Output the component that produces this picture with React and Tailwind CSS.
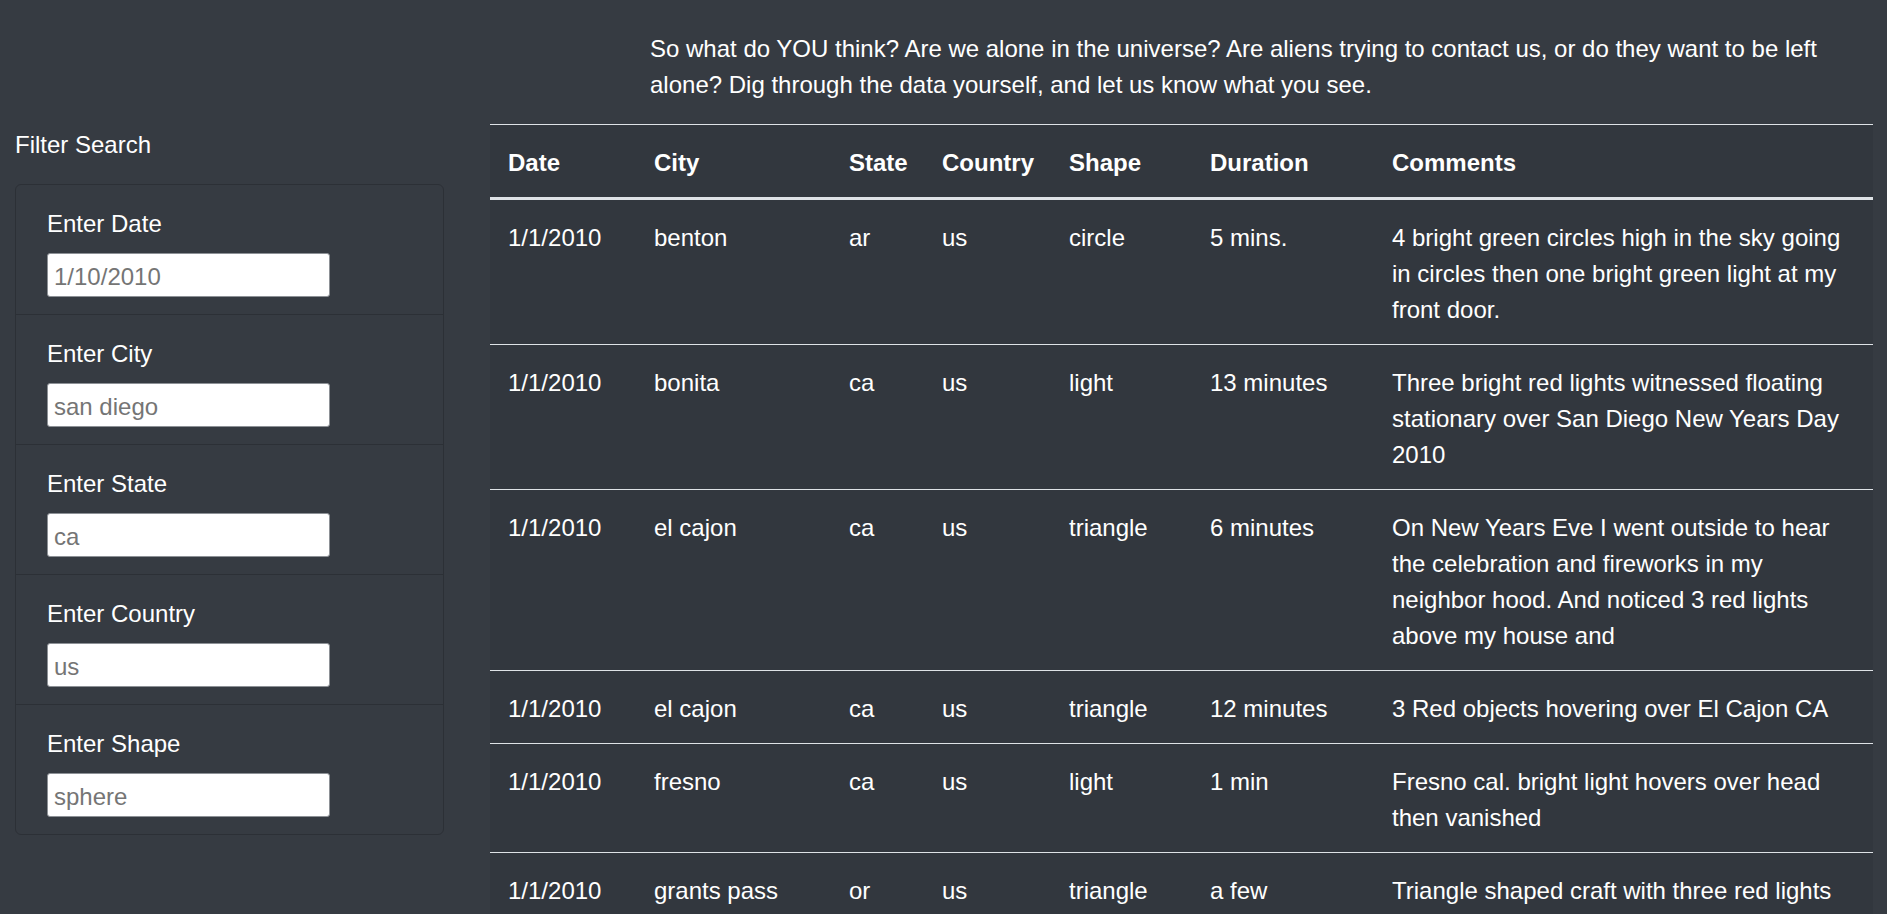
import React from 'react';

// Filter inputs shown in the left card
const filters = [
  { id: 'datetime', label: 'Enter Date', placeholder: '1/10/2010' },
  { id: 'city', label: 'Enter City', placeholder: 'san diego' },
  { id: 'state', label: 'Enter State', placeholder: 'ca' },
  { id: 'country', label: 'Enter Country', placeholder: 'us' },
  { id: 'shape', label: 'Enter Shape', placeholder: 'sphere' }
];

const columns = [
  { key: 'datetime', title: 'Date', width: 'w-[146px]' },
  { key: 'city', title: 'City', width: 'w-[195px]' },
  { key: 'state', title: 'State', width: 'w-[93px]' },
  { key: 'country', title: 'Country', width: 'w-[127px]' },
  { key: 'shape', title: 'Shape', width: 'w-[141px]' },
  { key: 'duration', title: 'Duration', width: 'w-[182px]' },
  { key: 'comments', title: 'Comments', width: 'w-[499px]' }
];

const sightings = [
  {
    datetime: '1/1/2010', city: 'benton', state: 'ar', country: 'us', shape: 'circle', duration: '5 mins.',
    comments: '4 bright green circles high in the sky going in circles then one bright green light at my front door.'
  },
  {
    datetime: '1/1/2010', city: 'bonita', state: 'ca', country: 'us', shape: 'light', duration: '13 minutes',
    comments: 'Three bright red lights witnessed floating stationary over San Diego New Years Day 2010'
  },
  {
    datetime: '1/1/2010', city: 'el cajon', state: 'ca', country: 'us', shape: 'triangle', duration: '6 minutes',
    comments: 'On New Years Eve I went outside to hear the celebration and fireworks in my neighbor hood. And noticed 3 red lights above my house and'
  },
  {
    datetime: '1/1/2010', city: 'el cajon', state: 'ca', country: 'us', shape: 'triangle', duration: '12 minutes',
    comments: '3 Red objects hovering over El Cajon CA'
  },
  {
    datetime: '1/1/2010', city: 'fresno', state: 'ca', country: 'us', shape: 'light', duration: '1 min',
    comments: 'Fresno cal. bright light hovers over head then vanished'
  },
  {
    datetime: '1/1/2010', city: 'grants pass', state: 'or', country: 'us', shape: 'triangle', duration: 'a few seconds',
    comments: 'Triangle shaped craft with three red lights moving slowly and silently toward the south'
  },
  {
    datetime: '1/1/2010', city: 'hanford', state: 'ca', country: 'us', shape: 'fireball', duration: '2 minutes',
    comments: 'Orange fireball rising over the field then fading out'
  }
];

export default function App() {
  return (
    <div className="min-h-screen bg-[#363b42] text-white font-['Liberation_Sans',Arial,sans-serif] text-[24px] leading-[36px]">
      <div className="flex">
        {/* Filter column */}
        <aside className="w-[475px] shrink-0 pl-[15px] pt-[127px]">
          <h4 className="font-normal">Filter Search</h4>
          <ul className="mt-[21px] w-[429px] border border-[#2c3036] rounded-[6px]">
            {filters.map((f, i) => (
              <li
                key={f.id}
                className={`px-[31px] pt-[21px] pb-[17px] ${i < filters.length - 1 ? 'border-b border-[#2c3036]' : ''}`}
              >
                <label htmlFor={f.id} className="block mb-[11px]">{f.label}</label>
                <input
                  id={f.id}
                  type="text"
                  placeholder={f.placeholder}
                  className="block w-[283px] h-[44px] bg-white border border-[#8d9196] rounded-[3px] px-[6px] pt-[4px] text-[24px] text-gray-900 placeholder:text-[#757575] outline-none"
                />
              </li>
            ))}
          </ul>
        </aside>

        {/* Intro + results table */}
        <main className="flex-1 pl-[15px] pr-[14px]">
          <p className="pt-[31px] pl-[160px] pr-[23px] mb-[21px]">
            So what do YOU think? Are we alone in the universe? Are aliens trying to contact us, or do they want to be left alone? Dig through the data yourself, and let us know what you see.
          </p>
          <table className="w-full table-fixed border-collapse bg-[#32373e]">
            <thead>
              <tr>
                {columns.map(col => (
                  <th
                    key={col.key}
                    className={`${col.width} px-[18px] pt-[20px] pb-[16px] text-left font-bold border-t border-b-[3px] border-[#dee2e6]`}
                  >
                    {col.title}
                  </th>
                ))}
              </tr>
            </thead>
            <tbody>
              {sightings.map((s, i) => (
                <tr key={i}>
                  {columns.map(col => (
                    <td key={col.key} className="px-[18px] pt-[20px] pb-[16px] align-top border-t border-[#dee2e6]">
                      {s[col.key]}
                    </td>
                  ))}
                </tr>
              ))}
            </tbody>
          </table>
        </main>
      </div>
    </div>
  );
}
